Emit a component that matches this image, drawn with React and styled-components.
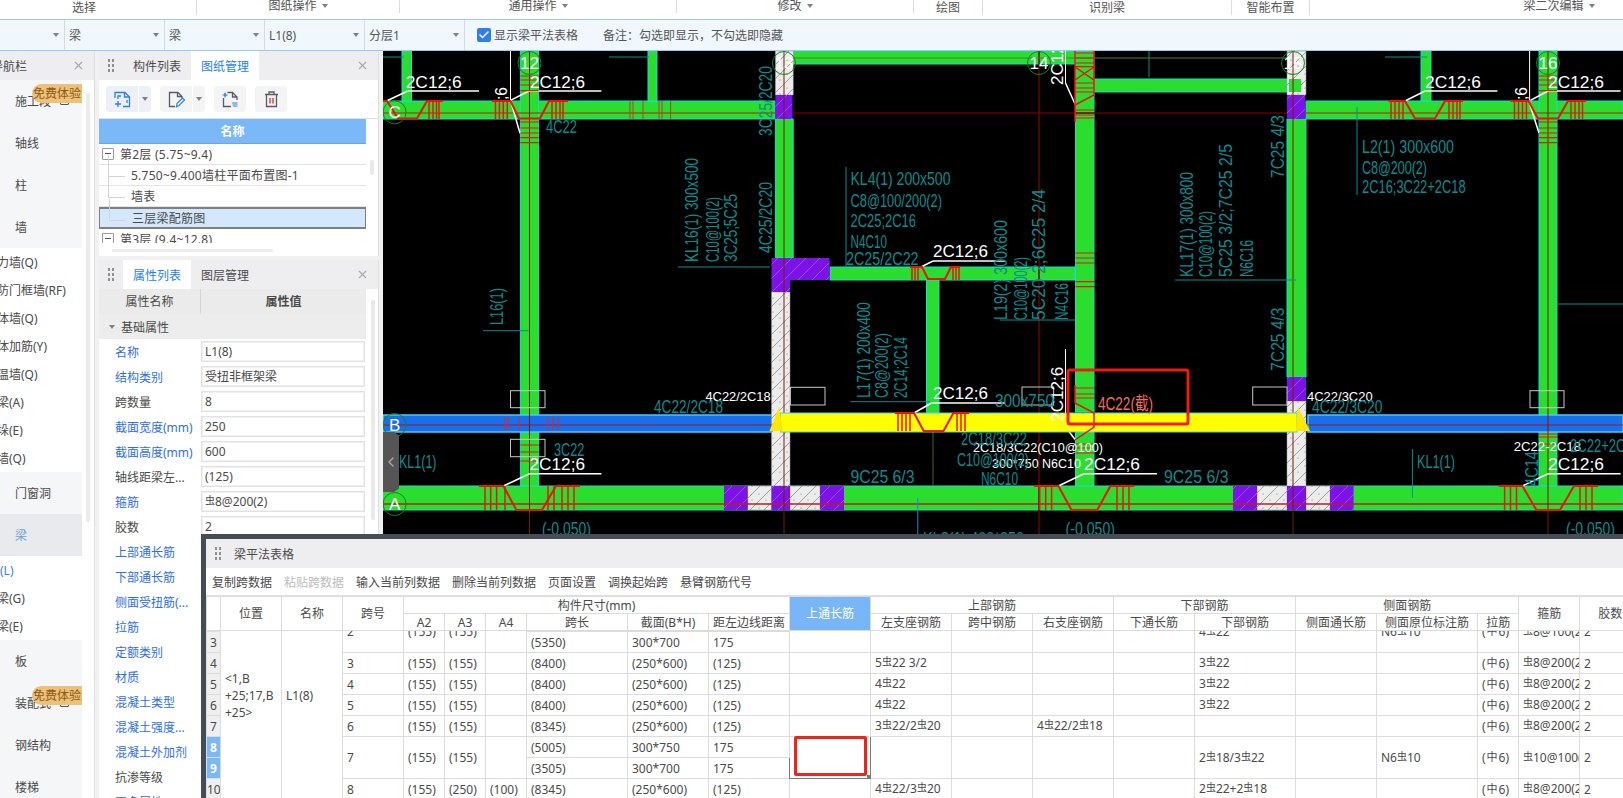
import styled, { createGlobalStyle } from "styled-components";
import { X, Check, ChevronLeft } from "lucide-react";

const Global = createGlobalStyle`
  html, body { margin: 0; padding: 0; background: #fff; overflow: hidden; }
  * { box-sizing: border-box; }
  body {
    font-family: "Noto Sans", "Noto Sans CJK SC", sans-serif;
    font-size: 12px;
    color: #4a4a4a;
  }
`;

const Page = styled.div`
  position: relative;
  width: 100vw;
  height: 100vh;
  overflow: hidden;
  display: flex;
  flex-direction: column;
`;

/* ---------- ribbon ---------- */
const Ribbon = styled.div`
  display: flex;
  height: 19px;
  background: #fff;
  overflow: hidden;
`;

const RibbonGroup = styled.div`
  width: ${(p) => p.$w}px;
  flex-shrink: 0;
  height: 15px;
  display: flex;
  justify-content: center;
  align-items: center;
  gap: 5px;
  padding: 0 ${(p) => p.$pr || 0}px 0 ${(p) => p.$pl || 0}px;
  border-right: 1px solid ${(p) => (p.$last ? "transparent" : "#dcdcdc")};
  color: #555;
  line-height: 15px;
  margin-top: ${(p) => (p.$raised ? -2 : 0)}px;
`;

const Caret = styled.i`
  display: inline-block;
  width: 0;
  height: 0;
  border-left: 3.5px solid transparent;
  border-right: 3.5px solid transparent;
  border-top: 4px solid #808080;
`;

/* ---------- beam toolbar ---------- */
const BeamBar = styled.div`
  display: flex;
  align-items: center;
  height: 32px;
  flex-shrink: 0;
  background: #f0f8fd;
  border-top: 1px solid #9cc8f4;
  border-bottom: 1px solid #9cc8f4;
`;

const SelectBox = styled.div`
  width: ${(p) => p.$w}px;
  height: 100%;
  display: flex;
  align-items: center;
  justify-content: space-between;
  padding: 0 5px 0 4px;
  border-right: 1px solid #d4dbe0;
  color: #555;
`;

const CheckBox = styled.span`
  width: 14px;
  height: 14px;
  margin-left: 12px;
  border-radius: 2px;
  background: #2f7fe8;
  color: #fff;
  display: flex;
  align-items: center;
  justify-content: center;
`;

const BarLabel = styled.span`
  margin-left: ${(p) => p.$ml}px;
  color: #555;
`;

/* ---------- main area ---------- */
const Main = styled.div`
  flex: 1;
  min-height: 0;
  display: flex;
  background: #f1f1f2;
`;

const NavPanel = styled.div`
  position: relative;
  width: 95px;
  flex-shrink: 0;
  background: #fff;
  border-right: 1px solid #dfdfdf;
  overflow: hidden;
`;

const PanelHead = styled.div`
  position: relative;
  height: ${(p) => p.$h || 29}px;
  display: flex;
  align-items: center;
  background: #eeeef0;
  flex-shrink: 0;
`;

const NavTitle = styled.span`
  margin-left: -33px;
  white-space: nowrap;
  font-size: 12px;
`;

const CloseBtn = styled.span`
  position: absolute;
  right: ${(p) => p.$r}px;
  top: 8px;
  color: #a8a8a8;
  display: flex;
`;

const NavGroup = styled.div`
  width: 82px;
  background: #f5f6f8;
`;

const NavItem = styled.div`
  position: relative;
  height: 42px;
  padding-left: 15px;
  display: flex;
  align-items: center;
  white-space: nowrap;
  background: ${(p) => (p.$active ? "#e9eaee" : "transparent")};
  color: ${(p) => (p.$active ? "#6d9fdc" : "#4a4a4a")};
`;

const NavSub = styled.div`
  height: 28px;
  margin-left: ${(p) => p.$ml || -15}px;
  display: flex;
  align-items: center;
  white-space: nowrap;
  color: ${(p) => (p.$active ? "#3b82e8" : "#4a4a4a")};
`;

const Badge = styled.span`
  position: absolute;
  left: 32px;
  top: 4px;
  width: 50px;
  height: 19px;
  border-radius: 10px 0 0 10px;
  background: #eec078;
  color: #8a5a1a;
  line-height: 19px;
  text-align: center;
  font-size: 12px;
  white-space: nowrap;
`;

const LockMark = styled.span`
  position: absolute;
  left: 60px;
  top: 15px;
  width: 9px;
  height: 10px;
  border: 1px solid #555;
  border-radius: 1px;
`;

const NavScroll = styled.span`
  position: absolute;
  left: 86px;
  top: 42px;
  bottom: 276px;
  width: 4px;
  border-radius: 2px;
  background: #ebebeb;
`;

const Sidebar = styled.div`
  width: 280px;
  margin-left: 4px;
  flex-shrink: 0;
  display: flex;
  flex-direction: column;
  gap: 4px;
`;

const Panel = styled.div`
  position: relative;
  background: #fff;
  overflow: hidden;
  height: ${(p) => (p.$h ? `${p.$h}px` : "auto")};
  flex: ${(p) => (p.$h ? "none" : 1)};
  border-right: 1px solid #dedede;
`;

const Grip = styled.span`
  width: 7px;
  height: 15px;
  margin-left: 8px;
  margin-right: ${(p) => p.$mr}px;
  flex-shrink: 0;
  background-image: radial-gradient(circle, #8f8f8f 1.2px, transparent 1.4px);
  background-size: 4px 5px;
`;

const Tab = styled.div`
  height: 100%;
  width: ${(p) => p.$w}px;
  display: flex;
  align-items: center;
  justify-content: center;
  background: ${(p) => (p.$on ? "#fff" : "transparent")};
  color: ${(p) => (p.$on ? "#1f82ee" : "#4a4a4a")};
`;

const IconBar = styled.div`
  height: 39px;
  padding: 6px 0 0 7px;
  display: flex;
  border-bottom: 1px solid #e2e2e2;
`;

const IconBtn = styled.span`
  width: 32px;
  height: 26px;
  margin-right: ${(p) => p.$mr || 0}px;
  display: flex;
  align-items: center;
  justify-content: center;
  background: ${(p) => (p.$on ? "#edf1f7" : "#f4f4f5")};
  border-radius: ${(p) => (p.$split ? "3px 0 0 3px" : "3px")};
`;

const IconDrop = styled.span`
  width: 12px;
  height: 26px;
  margin: 0 ${(p) => p.$mr}px 0 1px;
  display: flex;
  align-items: center;
  justify-content: center;
  background: ${(p) => (p.$on ? "#edf1f7" : "#f4f4f5")};
  border-radius: 0 3px 3px 0;
`;

const NameHead = styled.div`
  width: 267px;
  height: 25px;
  background: #7ab8f8;
  border-bottom: 1px solid #6aa6e6;
  color: #fff;
  font-weight: 700;
  line-height: 25px;
  text-align: center;
`;

const TreeBody = styled.div`
  width: 267px;
  height: 99px;
  overflow: hidden;
`;

const TreeRow = styled.div`
  position: relative;
  height: ${(p) => (p.$sel ? 22 : 21)}px;
  display: flex;
  align-items: center;
  white-space: nowrap;
  letter-spacing: 0.25px;
  padding-left: ${(p) => (p.$leaf ? 32 : 3)}px;
  border-bottom: 1px solid #e4e4e4;
  background: ${(p) => (p.$sel ? "#d3e8fc" : "#fff")};
  ${(p) => p.$sel && "border: 1px solid #7f7f7f; border-width: 2px 1px 2px 1px;"}

  &::before {
    content: "";
    display: ${(p) => (p.$leaf ? "block" : "none")};
    position: absolute;
    left: 9px;
    top: -10px;
    width: 16px;
    height: 21px;
    border-left: 1px solid #d4d4d4;
    border-bottom: 1px solid #d4d4d4;
  }
`;

const ExpandBox = styled.span`
  position: relative;
  width: 12px;
  height: 12px;
  margin-right: 6px;
  border: 1px solid #9a9a9a;
  border-radius: 1px;
  background: #fff;

  &::after {
    content: "";
    position: absolute;
    left: 2px;
    top: 4px;
    width: 6px;
    height: 1px;
    background: #555;
  }
`;

const HScroll = styled.div`
  width: 161px;
  height: 3px;
  margin: 6px 0 0 13px;
  border-radius: 2px;
  background: #ededed;
`;

const VScroll = styled.span`
  position: absolute;
  left: ${(p) => p.$l}px;
  top: ${(p) => p.$t}px;
  width: 4px;
  height: ${(p) => p.$h}px;
  border-radius: 2px;
  background: #e9e9e9;
`;

const PropHead = styled.div`
  width: 267px;
  height: 25px;
  display: grid;
  grid-template-columns: 101px 1fr;
  background: #ebebeb;
  line-height: 25px;
  text-align: center;
`;

const PropHeadCell = styled.div`
  font-weight: ${(p) => (p.$bold ? 700 : 400)};
  border-left: ${(p) => (p.$bold ? "1px solid #d6d6d6" : "none")};
`;

const PropSection = styled.div`
  width: 267px;
  height: 25px;
  display: flex;
  align-items: center;
  gap: 6px;
  padding-left: 10px;
  background: #ededed;
`;

const PropRow = styled.div`
  height: 25px;
  display: grid;
  grid-template-columns: 102px 164px;
  align-items: center;
  white-space: nowrap;
`;

const PropLabel = styled.span`
  padding-left: 16px;
  color: ${(p) => (p.$blue ? "#2f6fe6" : "#4a4a4a")};
`;

const PropValue = styled.span`
  height: 21px;
  padding-left: 3px;
  border: 1px solid #e2e2e2;
  box-shadow: inset 0 0 0 1px #f0f0f0;
  line-height: 19px;
`;

/* ---------- drawing ---------- */
const Canvas = styled.div`
  position: relative;
  flex: 1;
  min-width: 0;
  margin-left: 4px;
  background: #000;
  overflow: hidden;

  svg {
    display: block;
    width: 100%;
    height: 100%;
  }
  text {
    font-family: "Liberation Sans", "Noto Sans CJK SC", sans-serif;
  }
`;

const CollapseTab = styled.div`
  position: absolute;
  left: 0;
  top: 381px;
  width: 16px;
  height: 60px;
  background: #555;
  color: #aaa;
  display: flex;
  align-items: center;
  clip-path: polygon(0 0, 70% 0, 100% 6%, 100% 94%, 70% 100%, 0 100%);
`;

/* ---------- floating table window ---------- */
const FloatWindow = styled.div`
  position: absolute;
  left: 201px;
  top: 534px;
  width: 1500px;
  height: 300px;
  border: 5px solid #444c55;
  background: #fff;
  overflow: hidden;
`;

const WindowTitle = styled.div`
  height: 29px;
  display: flex;
  align-items: center;
  background: #eeeef0;
`;

const WindowTools = styled.div`
  height: 28px;
  display: flex;
  align-items: center;
  gap: 12px;
  padding-left: 6px;
  border-bottom: 1px solid #e0e0e0;
`;

const ToolLink = styled.span`
  color: ${(p) => (p.$off ? "#bdbdbd" : "#4a4a4a")};
  white-space: nowrap;
`;

const Table = styled.table`
  table-layout: fixed;
  border-collapse: collapse;
  width: 1434px;
  margin-top: ${(p) => p.$mt || 0}px;
`;

const BodyClip = styled.div`
  height: 170px;
  overflow: hidden;
`;

const Th = styled.td`
  height: 17px;
  padding: 0;
  border: 1px solid #dcdcdc;
  text-align: center;
  white-space: nowrap;
  overflow: hidden;
  line-height: 15px;
  background: ${(p) => (p.$pick ? "#78b6f7" : "#fff")};
  color: ${(p) => (p.$pick ? "#fff" : "#4a4a4a")};
`;

const Td = styled.td`
  height: 21px;
  padding: ${(p) => p.$pt || 0}px 0 0 4px;
  border: 1px solid #dcdcdc;
  white-space: nowrap;
  overflow: hidden;
  line-height: 17px;
  ${(p) => p.$pt && "vertical-align: top;"}
`;

const RowNo = styled.td`
  height: 21px;
  padding: 0;
  border: 1px solid #dcdcdc;
  text-align: center;
  overflow: hidden;
  background: ${(p) => (p.$on ? "#7ab8f8" : "#efefef")};
  color: ${(p) => (p.$on ? "#fff" : "#4a4a4a")};
  font-weight: ${(p) => (p.$on ? 700 : 400)};
`;

const PickedCell = styled.td`
  position: relative;
  padding: 0;
  border: 1px solid #7a7a7a;
`;

const RedBox = styled.span`
  position: absolute;
  left: 4px;
  top: -1px;
  width: 73px;
  height: 40px;
  border: 3px solid #f0241a;
  border-radius: 2px;
`;

const PickHandle = styled.span`
  position: absolute;
  right: -1px;
  bottom: -1px;
  width: 4px;
  height: 4px;
  background: #7a7a7a;
`;

const BarMark = styled.span`
  font-size: 10px;
  position: relative;
  top: -2px;
`;

const RoundMark = styled.span`
  font-size: 11px;
  position: relative;
  top: -1px;
  margin: 0 1px;
`;

/* ---------- data ---------- */
const ribbon = [
  { t: "选择", w: 197, pr: 28 },
  { t: "图纸操作", w: 203, caret: true },
  { t: "通用操作", w: 277, caret: true },
  { t: "修改", w: 237, caret: true },
  { t: "绘图", w: 69 },
  { t: "识别梁", w: 249 },
  { t: "智能布置", w: 78 },
  { t: "梁二次编辑", w: 313, caret: true, pl: 186, last: true },
];

const navA = ["施工段", "轴线", "柱", "墙"];
const navB = ["剪力墙(Q)", "人防门框墙(RF)", "砌体墙(Q)", "砌体加筋(Y)", "保温墙(Q)", "暗梁(A)", "墙垛(E)", "幕墙(Q)"];
const navC = ["板", "装配式", "钢结构", "楼梯"];

const props = [
  ["名称", "L1(8)", 1],
  ["结构类别", "受扭非框架梁", 1],
  ["跨数量", "8", 0],
  ["截面宽度(mm)", "250", 1],
  ["截面高度(mm)", "600", 1],
  ["轴线距梁左...", "(125)", 0],
  ["箍筋", "#8@200(2)", 1],
  ["胶数", "2", 0],
  ["上部通长筋", "", 1],
  ["下部通长筋", "", 1],
  ["侧面受扭筋(...", "", 1],
  ["拉筋", "", 1],
  ["定额类别", "", 1],
  ["材质", "", 1],
  ["混凝土类型", "", 1],
  ["混凝土强度...", "", 1],
  ["混凝土外加剂", "", 1],
  ["抗渗等级", "", 0],
  ["更多属性", "", 1],
];

const colWidths = [14, 61, 61, 61, 41, 41, 41, 101, 81, 81, 81, 81, 81, 81, 81, 101, 81, 101, 41, 61, 61];

const tools = [
  ["复制跨数据"],
  ["粘贴跨数据", true],
  ["输入当前列数据"],
  ["删除当前列数据"],
  ["页面设置"],
  ["调换起始跨"],
  ["悬臂钢筋代号"],
];

const S = (t) => [t, 2];
const rows = [
  { no: 2, c: [S("2"), S("(155)"), S("(155)"), S(""), "(3000)", "300*750", "175", S(""), S(""), S(""), S(""), S(""), S("4#22"), S(""), S("N6#10"), S("($6)"), S("#8@100(2)"), S("2")] },
  { no: 3, c: [null, null, null, null, "(5350)", "300*700", "175"] },
  { no: 4, c: ["3", "(155)", "(155)", "", "(8400)", "(250*600)", "(125)", "", "5#22 3/2", "", "", "", "3#22", "", "", "($6)", "#8@200(2)", "2"] },
  { no: 5, c: ["4", "(155)", "(155)", "", "(8400)", "(250*600)", "(125)", "", "4#22", "", "", "", "3#22", "", "", "($6)", "#8@200(2)", "2"] },
  { no: 6, c: ["5", "(155)", "(155)", "", "(8400)", "(250*600)", "(125)", "", "4#22", "", "", "", "3#22", "", "", "($6)", "#8@200(2)", "2"] },
  { no: 7, c: ["6", "(155)", "(155)", "", "(8345)", "(250*600)", "(125)", "", "3#22/2#20", "", "4#22/2#18", "", "", "", "", "($6)", "#8@200(2)", "2"] },
  { no: 8, on: true, c: [S("7"), S("(155)"), S("(155)"), S(""), "(5005)", "300*750", "175", "PICK", S(""), S(""), S(""), S(""), S("2#18/3#22"), S(""), S("N6#10"), S("($6)"), S("#10@100(2)"), S("2")] },
  { no: 9, on: true, c: [null, null, null, null, "(3505)", "300*700", "175"] },
  { no: 10, c: ["8", "(155)", "(250)", "(100)", "(8345)", "(250*600)", "(125)", "", "4#22/3#20", "", "", "", "2#22+2#18", "", "", "($6)", "#8@200(2)", "2"] },
];

// 虫 / 中 stand in for the rebar grade symbols of the cad font
const rich = (t) =>
  t.split(/([#$])/).map((part, i) =>
    part === "#" ? <BarMark key={i}>虫</BarMark> : part === "$" ? <RoundMark key={i}>中</RoundMark> : part
  );

const CYAN = "#0a8c90";
const green = [
  [383, 101, 392, 18], [793, 51, 282, 13], [1094, 79, 193, 13], [1306, 101, 317, 18],
  [830, 267, 245, 13], [926.5, 280, 12.5, 133], [402, 51, 9.5, 50], [648, 51, 9, 50],
  [1421, 51, 10, 50], [520.4, 51, 18.2, 364], [520.4, 432, 18.2, 54], [775.4, 119, 17.8, 139],
  [1075.5, 51, 18.5, 361], [1075.5, 432, 18.5, 54], [1287, 119, 19, 258], [1539, 51, 18, 364],
  [1539, 432, 18, 54], [383, 486, 1240, 24],
];
const walls = [
  [775.4, 51, 17.8, 44], [771.5, 292, 18.5, 194], [1287, 51, 19, 44], [1287, 401, 19, 85],
  [747.7, 486, 23.8, 24], [790, 486, 30, 24], [1257, 486, 30, 24], [1306, 486, 24, 24],
];
const purple = [
  [775.4, 95, 17, 24], [771.5, 258, 58, 22], [771.5, 280, 18.5, 12], [1287, 95, 18, 24],
  [1287, 377, 19, 24], [724, 486, 23.7, 24], [771.5, 486, 18.5, 24], [820, 486, 24, 24],
  [1233, 486, 24, 24], [1287, 486, 19, 24], [1330, 486, 23.6, 24],
];

const redShapes = [
  { pts: "383,101 387,101 398,118.5 417,118.5 427,101 443,101", bars: [429, 433, 436.5, 439], y: [101, 119] },
  { pts: "492,101 510.5,101 519,118.5 540,118.5 549,101 568,101", bars: [495.5, 499.4, 503.3, 507.3, 552, 556, 560, 563], y: [101, 119] },
  { pts: "1388.5,101 1405,101 1415,118.5 1435,118.5 1445,101 1463,101", bars: [1391, 1395, 1399, 1403, 1449, 1453, 1457, 1460], y: [101, 119] },
  { pts: "1510.5,101 1528.4,101 1538,118.5 1558,118.5 1568,101 1586,101", bars: [1514.5, 1518.5, 1522.5, 1526.4, 1571, 1575, 1579, 1582.5], y: [101, 119] },
  { pts: "895,413 914,413 923.7,431 943.5,431 953.4,413 969,413", bars: [898, 902, 906, 910, 957, 961, 965], y: [413, 431] },
  { pts: "910,267 922,267 928,279 945,279 951,267 960,267", bars: [912, 915, 918, 953, 956, 959], y: [267, 280] },
  { pts: "479,486 503.4,486 516.4,510 542,510 556,486 580,486", bars: [485, 490.7, 496.6, 505, 548, 554, 562, 568, 574], y: [486, 510] },
  { pts: "1033.8,486 1058.4,486 1071.5,510 1097.3,510 1110.4,486 1134.3,486", bars: [1039.7, 1045.7, 1051.6, 1117, 1123, 1129], y: [486, 510] },
  { pts: "1498.6,486 1522.4,486 1536.4,510 1560,510 1574,486 1598,486", bars: [1504.6, 1510.5, 1516.5, 1580, 1586, 1592], y: [486, 510] },
];

// [x, baseline, width, size, text, fill, rotated]
const W = "#fff";
const labels = [
  [405.7, 87.5, 56, 17, "2C12;6", W], [530, 87.5, 55, 17, "2C12;6", W], [1425, 87.5, 56, 17, "2C12;6", W],
  [1548, 87.5, 56, 17, "2C12;6", W], [933, 257, 55, 17, "2C12;6", W], [933, 399, 55, 17, "2C12;6", W],
  [529.5, 470, 55.5, 17, "2C12;6", W], [1084, 470, 56, 17, "2C12;6", W], [1548, 470, 56, 17, "2C12;6", W],
  [1063, 85, 55, 17, "2C12;6", W, 1], [1063, 421.7, 55, 17, "2C12;6", W, 1], [507, 100, 13, 17, ";6", W, 1], [1527, 100, 13, 17, ";6", W, 1],
  [705.4, 401, 65.3, 13, "4C22/2C18", W], [1307, 400.7, 65.7, 13, "4C22/3C20", W], [973, 451.7, 130, 13, "2C18/3C22(C10@100)", W],
  [992, 468, 89, 13, "300*750 N6C10", W], [1513.7, 450.7, 67.3, 13, "2C22-2C18", W],
  [546, 133, 31, 18, "4C22", CYAN], [772, 136, 70, 18, "3C25/2C20", CYAN, 1], [772, 253, 71, 18, "4C25/2C20", CYAN, 1],
  [698, 262, 104, 18, "KL16(1) 300x500", CYAN, 1], [719, 262, 65, 18, "C10@100(2)", CYAN, 1], [737, 262, 68, 18, "3C25;5C25", CYAN, 1],
  [850.5, 185, 100, 18, "KL4(1) 200x500", CYAN], [850.5, 206.7, 91.5, 18, "C8@100/200(2)", CYAN], [850.5, 226.7, 65.5, 18, "2C25;2C16", CYAN],
  [850.5, 248, 36.5, 18, "N4C10", CYAN], [846, 265, 72.6, 18, "2C25/2C22", CYAN],
  [1362, 152.7, 92, 18, "L2(1) 300x600", CYAN], [1362, 174, 65, 18, "C8@200(2)", CYAN], [1362, 192.7, 103.6, 18, "2C16;3C22+2C18", CYAN],
  [1284, 178, 63, 18, "7C25 4/3", CYAN, 1], [1284, 370.7, 63, 18, "7C25 4/3", CYAN, 1],
  [1193, 277, 105, 18, "KL17(1) 300x800", CYAN, 1], [1212, 277, 66, 18, "C10@100(2)", CYAN, 1], [1232, 277, 133, 18, "5C25 3/2;7C25 2/5", CYAN, 1],
  [1253, 277, 37, 18, "N6C16", CYAN, 1],
  [1007, 320, 100, 18, "L19(2) 300x600", CYAN, 1], [1027, 320, 63, 18, "C10@100(2)", CYAN, 1], [1045, 320, 131, 18, "5C20 2;6C25 2/4", CYAN, 1], [1068, 320, 37, 18, "N4C16", CYAN, 1],
  [503, 325, 37, 18, "L16(1)", CYAN, 1], [654, 413, 69, 18, "4C22/2C18", CYAN], [1312, 413, 70.6, 18, "4C22/3C20", CYAN],
  [399, 467.7, 37.5, 18, "KL1(1)", CYAN], [1417, 467.7, 38, 18, "KL1(1)", CYAN], [554, 456, 30.4, 18, "3C22", CYAN],
  [870, 398, 96, 18, "L17(1) 200x400", CYAN, 1], [888, 398, 65, 18, "C8@200(2)", CYAN, 1], [907, 398, 61, 18, "2C14;2C14", CYAN, 1],
  [961, 445, 66, 18, "2C18/3C22", CYAN], [957, 466, 72, 18, "C10@100(2)", CYAN], [981, 485, 37, 18, "N6C10", CYAN], [995, 407, 59, 18, "300x750", CYAN],
  [850.5, 483, 64, 18, "9C25 6/3", CYAN], [1164, 483, 64.5, 18, "9C25 6/3", CYAN],
  [542, 534.7, 49, 18, "(-0.050)", CYAN], [1065.5, 534.7, 49.5, 18, "(-0.050)", CYAN], [1566, 534.7, 49, 18, "(-0.050)", CYAN],
  [1570, 451.7, 70, 18, "2C22+2C18", CYAN], [1538, 486, 35, 18, "4C14", CYAN, 1], [923, 545, 101, 18, "KL8(1) 400*850", CYAN],
  [1098, 410, 55, 18, "4C22(截)", "#f56a58"],
];

const axes = [
  [394.6, 112.3, "C"], [529.5, 63, "12"], [784, 63, "13"], [1039, 63, "14"],
  [1293, 63, "15"], [1548, 63, "16"], [394.6, 425, "B"], [394.6, 504, "A"],
];

// [x1, y1, x2, y2, colour, width]
const lines = [
  [383, 113, 775, 113, "#8a5c1c", 1.5], [793, 113, 1287, 113, "#5c0000", 1.5], [1306, 113, 1623, 113, "#8a5c1c", 1.5],
  [383, 425, 780, 425, "#a01818", 1], [1308, 425, 1623, 425, "#a01818", 1], [383, 504, 1623, 504, "#c01c1c", 1.5],
  [529.5, 51, 529.5, 534, "#7a1a00", 1], [784, 51, 784, 534, "#7a1a00", 1], [1039, 51, 1039, 534, "#6a0606", 1.5],
  [1293, 51, 1293, 534, "#7a1a00", 1], [1548, 51, 1548, 534, "#7a1a00", 1], [933, 432, 933, 486, "#3a6a28", 1],
  [793, 58, 1287, 58, "#4a7a38", 1],
  [407.7, 91, 479, 91, W, 1.5], [407.7, 91, 387, 100.7, W, 1.5], [529, 91, 601.4, 91, W, 1.5], [529, 91, 510.5, 100.4, W, 1.5],
  [510.5, 51, 510.5, 100, W, 1], [510.5, 100.4, 520, 133.3, W, 1.5], [1425, 91, 1497.4, 91, W, 1.5], [1425, 91, 1405, 101, W, 1.5],
  [1548, 91, 1620.6, 91, W, 1.5], [1548, 91, 1530.4, 100.4, W, 1.5], [1529.6, 51, 1529.6, 100, W, 1], [1528.4, 100, 1539, 133, W, 1.5],
  [931.6, 403, 1005, 403, W, 1.5], [931.6, 403, 914, 413, W, 1.5], [933, 261, 1005, 261, W, 1.5], [933, 261, 921, 267, W, 1.5],
  [529.5, 473.7, 601.4, 473.7, W, 1.5], [529.5, 473.7, 503.4, 486, W, 1.5], [1084, 473.7, 1157, 473.7, W, 1.5], [1084, 473.7, 1058.4, 486, W, 1.5],
  [1548, 473.7, 1620.6, 473.7, W, 1.5], [1548, 473.7, 1522.4, 486, W, 1.5],
  [1065.5, 51, 1065.5, 83, W, 1], [1065.5, 83, 1075.5, 105, W, 1.5], [1065.5, 349, 1065.5, 427, W, 1], [1065.5, 427, 1075.5, 440, W, 1.5],
  [846, 167, 846, 267, CYAN, 1], [678, 267, 770, 267, CYAN, 1], [1357, 107, 1357, 195, CYAN, 1], [483, 330.7, 528.7, 330.7, CYAN, 1],
  [850.5, 401.7, 930, 401.7, CYAN, 1], [1175, 280, 1296, 280, CYAN, 1], [1000, 320, 1075, 320, CYAN, 1], [917.8, 498, 917.8, 534, "#1a8ad0", 1],
  [1412.4, 449, 1412.4, 498, CYAN, 1], [383, 57, 404, 57, CYAN, 1], [609, 57, 649, 57, CYAN, 1], [1385, 57, 1427, 57, CYAN, 1], [1149, 51, 1149, 77, CYAN, 1],
  [1557, 304, 1623, 304, CYAN, 1],
];

// red stirrups across a column: left edge, width, heights
const stirrups = [
  [520.4, 18.2, [76, 80, 85, 90.7, 122, 128, 133, 137.7, 142.7, 445, 452, 461]],
  [1539, 18, [76, 80, 85, 90.7, 122, 128, 133, 137.7, 142.7, 434, 437, 444]],
  [1075.5, 18.5, [53, 58, 63, 66.7, 83, 88, 92, 110, 115, 118, 253, 258, 263, 281.6, 286.7, 388, 394, 398, 444, 448, 453]],
];
const redZig = "M1075,51 V122 M1094,51 V80 L1075,67 M1075,80 L1094,67 M1094,80 V95 L1075,105 M1075,385 V403 L1094,413 V427 L1075,440";

const dims = [[630, 633, 643, 659, 662, 670.6], [505, 508, 519, 548, 553, 558]];

const whiteBoxes = [
  [790.4, 387.3, 34.6, 17.7], [510.5, 390.7, 34.5, 17], [510.5, 439.3, 34.5, 17.4],
  [1252.7, 387, 34.3, 18], [1022, 387, 31.6, 18], [1530, 390.7, 34, 17],
];

function CadDrawing() {
  return (
    <svg viewBox="383 51 1240 747" preserveAspectRatio="none">
      <defs>
        <pattern id="wallHatch" width="14" height="14" patternUnits="userSpaceOnUse">
          <rect width="14" height="14" fill="#ececec" />
          <path d="M0 14 L14 0" stroke="#8a8a8a" strokeWidth="0.8" />
          <circle cx="3" cy="4" r="0.6" fill="#777" />
          <circle cx="10" cy="10" r="0.6" fill="#777" />
        </pattern>
        <pattern id="purpleHatch" width="14" height="14" patternUnits="userSpaceOnUse">
          <rect width="14" height="14" fill="#7d12e8" />
          <path d="M0 14 L14 0" stroke="#a880d8" strokeWidth="0.6" />
        </pattern>
      </defs>

      {green.map(([x, y, w, h], i) => (
        <rect key={i} x={x} y={y} width={w} height={h} fill="#2bdd2f" stroke="#16dcdc" strokeWidth="1" />
      ))}
      <rect x="383" y="415" width="397" height="17" fill="#176ff0" stroke="#4fc6f0" strokeWidth="1.5" />
      <rect x="1308" y="415" width="315" height="17" fill="#176ff0" stroke="#4fc6f0" strokeWidth="1.5" />
      {walls.map(([x, y, w, h], i) => (
        <rect key={i} x={x} y={y} width={w} height={h} fill="url(#wallHatch)" stroke="#9a9a9a" strokeWidth="0.5" />
      ))}
      <rect x="1289" y="79" width="12" height="13" fill="#2bdd2f" />
      {purple.map(([x, y, w, h], i) => (
        <rect key={i} x={x} y={y} width={w} height={h} fill="url(#purpleHatch)" />
      ))}

      {lines.map(([x1, y1, x2, y2, c, w], i) => (
        <line key={i} x1={x1} y1={y1} x2={x2} y2={y2} stroke={c} strokeWidth={w} />
      ))}

      <rect x="780.5" y="413" width="516.5" height="19" fill="#ffff00" stroke="#4fd0e0" strokeWidth="1" />
      <polygon points="779,407 769.5,431 783,431" fill="#ffe800" />
      <polygon points="1298,407 1296,431 1310,431" fill="#ffe800" />

      {redShapes.map((s, i) => (
        <g key={i} stroke="#f01010" fill="none" strokeWidth="1.5">
          <polyline points={s.pts} strokeWidth="2" />
          {s.bars.map((x) => (
            <line key={x} x1={x} y1={s.y[0]} x2={x} y2={s.y[1]} />
          ))}
        </g>
      ))}
      {stirrups.map(([left, w, ys], i) => (
        <path
          key={i}
          d={ys.map((y) => `M${left} ${y}h${w}`).join(" ")}
          stroke="#f01010"
          strokeWidth="1.2"
          fill="none"
        />
      ))}
      <path d={redZig} stroke="#f01010" strokeWidth="1.5" fill="none" />
      {dims.map((xs, i) =>
        xs.map((x) =>
          i === 0 ? (
            <line key={x} x1={x} y1="101" x2={x} y2="119" stroke="#c03a2a" strokeWidth="1" />
          ) : (
            <line key={x} x1={x} y1="417" x2={x} y2="430" stroke="#e0202a" strokeWidth="1" />
          )
        )
      )}

      {whiteBoxes.map(([x, y, w, h], i) => (
        <rect key={i} x={x} y={y} width={w} height={h} fill="none" stroke="#c8c8c8" strokeWidth="1" />
      ))}

      {axes.map(([x, y, t]) => (
        <g key={t}>
          <circle cx={x} cy={y} r="11.5" fill="none" stroke="#0c8a14" strokeWidth="1" />
          <text x={x} y={y + 6} textAnchor="middle" fontSize="17" fill="#fff">{t}</text>
        </g>
      ))}

      {labels.map(([x, y, len, size, t, fill, rot], i) => (
        <text
          key={i}
          x={x}
          y={y}
          fontSize={size}
          fill={fill}
          textLength={len}
          lengthAdjust="spacingAndGlyphs"
          transform={rot ? `rotate(-90 ${x} ${y})` : undefined}
        >
          {t}
        </text>
      ))}

      <rect x="1068" y="370" width="120" height="54" rx="2" fill="none" stroke="#f01a10" strokeWidth="3" />
    </svg>
  );
}

function AddPlanIcon() {
  return (
    <svg width="17" height="17" viewBox="0 0 17 17" fill="none" stroke="#2d7fe6" strokeWidth="1.3">
      <path d="M1 7V1.5H11L15.5 6V15.5H9" />
      <path d="M10.5 1.5V6H15.5" />
      <path d="M4 8V5H7" />
      <path d="M13 9V12" />
      <path d="M1 13H7M4 10V16" />
    </svg>
  );
}

function EditPlanIcon() {
  return (
    <svg width="17" height="17" viewBox="0 0 17 17" fill="none" strokeWidth="1.3">
      <path d="M7 15.5H1.5V1.5H10L14 5.5V7" stroke="#555b6a" />
      <path d="M9.5 1.5V5.5H14" stroke="#555b6a" />
      <path d="M8.5 15.8L9 12.5L14.5 7L16.5 9L11 14.5Z" stroke="#3f86e6" />
    </svg>
  );
}

function ExportPlanIcon() {
  return (
    <svg width="17" height="17" viewBox="0 0 17 17" fill="none" strokeWidth="1.3">
      <path d="M1.5 7V15.5H9M5.5 1.5H10.5L15 6V9" stroke="#555b6a" />
      <path d="M10.5 1.5V6H15" stroke="#555b6a" />
      <path d="M3 1L4.2 3.2L6.3 4L4.2 4.8L3 7L2 4.8L0 4L2 3.2Z" fill="#3f86e6" stroke="none" />
      <path d="M10 11H15.5V16H11Z" fill="#8db8ee" stroke="none" />
    </svg>
  );
}

function BinIcon() {
  return (
    <svg width="15" height="17" viewBox="0 0 15 17" fill="none" strokeWidth="1.3">
      <path d="M1 3.5H14M5 3.5V1H10V3.5" stroke="#555b6a" />
      <path d="M2.5 3.5V15.5H12.5V3.5" stroke="#555b6a" />
      <path d="M6 7V12.5M9 7V12.5" stroke="#e02a22" />
    </svg>
  );
}

export default function App() {
  return (
    <Page>
      <Global />
      <Ribbon>
        {ribbon.map((g) => (
          <RibbonGroup key={g.t} $w={g.w} $pr={g.pr} $pl={g.pl} $last={g.last} $raised={g.caret}>
            {g.t}
            {g.caret && <Caret />}
          </RibbonGroup>
        ))}
      </Ribbon>

      <BeamBar>
        <SelectBox $w={65}>
          <span />
          <Caret />
        </SelectBox>
        {["梁", "梁", "L1(8)", "分层1"].map((t, i) => (
          <SelectBox key={i} $w={100}>
            {t}
            <Caret />
          </SelectBox>
        ))}
        <CheckBox>
          <Check size={12} strokeWidth={3} />
        </CheckBox>
        <BarLabel $ml={3}>显示梁平法表格</BarLabel>
        <BarLabel $ml={25}>备注：勾选即显示，不勾选即隐藏</BarLabel>
      </BeamBar>

      <Main>
        <NavPanel>
          <PanelHead>
            <NavTitle>模块导航栏</NavTitle>
            <CloseBtn $r={9}>
              <X size={13} />
            </CloseBtn>
          </PanelHead>
          <NavGroup>
            {navA.map((t, i) => (
              <NavItem key={t}>
                {t}
                {i === 0 && (
                  <>
                    <LockMark />
                    <Badge>免费体验</Badge>
                  </>
                )}
              </NavItem>
            ))}
          </NavGroup>
          {navB.map((t) => (
            <NavSub key={t}>{t}</NavSub>
          ))}
          <NavGroup>
            <NavItem>门窗洞</NavItem>
            <NavItem $active>梁</NavItem>
          </NavGroup>
          <NavSub $active $ml={-12}>梁(L)</NavSub>
          <NavSub>连梁(G)</NavSub>
          <NavSub>圈梁(E)</NavSub>
          <NavGroup>
            {navC.map((t, i) => (
              <NavItem key={t}>
                {t}
                {i === 1 && (
                  <>
                    <LockMark />
                    <Badge>免费体验</Badge>
                  </>
                )}
              </NavItem>
            ))}
          </NavGroup>
          <NavScroll />
        </NavPanel>

        <Sidebar>
          <Panel $h={205}>
            <PanelHead>
              <Grip $mr={9} />
              <Tab $w={68}>构件列表</Tab>
              <Tab $w={68} $on>图纸管理</Tab>
              <CloseBtn $r={9}>
                <X size={13} />
              </CloseBtn>
            </PanelHead>
            <IconBar>
              <IconBtn $on $split><AddPlanIcon /></IconBtn>
              <IconDrop $on $mr={9}><Caret /></IconDrop>
              <IconBtn $split><EditPlanIcon /></IconBtn>
              <IconDrop $mr={9}><Caret /></IconDrop>
              <IconBtn $mr={9}><ExportPlanIcon /></IconBtn>
              <IconBtn><BinIcon /></IconBtn>
            </IconBar>
            <NameHead>名称</NameHead>
            <TreeBody>
              <TreeRow><ExpandBox />第2层 (5.75~9.4)</TreeRow>
              <TreeRow $leaf>5.750~9.400墙柱平面布置图-1</TreeRow>
              <TreeRow $leaf>墙表</TreeRow>
              <TreeRow $leaf $sel>三层梁配筋图</TreeRow>
              <TreeRow><ExpandBox />第3层 (9.4~12.8)</TreeRow>
            </TreeBody>
            <HScroll />
            <VScroll $l={271} $t={109} $h={15} />
          </Panel>

          <Panel>
            <PanelHead>
              <Grip $mr={9} />
              <Tab $w={68} $on>属性列表</Tab>
              <Tab $w={68}>图层管理</Tab>
              <CloseBtn $r={9}>
                <X size={13} />
              </CloseBtn>
            </PanelHead>
            <PropHead>
              <PropHeadCell>属性名称</PropHeadCell>
              <PropHeadCell $bold>属性值</PropHeadCell>
            </PropHead>
            <PropSection>
              <Caret />
              基础属性
            </PropSection>
            {props.map(([label, value, blue]) => (
              <PropRow key={label}>
                <PropLabel $blue={blue}>{label}</PropLabel>
                <PropValue>{rich(value)}</PropValue>
              </PropRow>
            ))}
            <VScroll $l={272} $t={40} $h={220} />
          </Panel>
        </Sidebar>

        <Canvas>
          <CadDrawing />
          <CollapseTab>
            <ChevronLeft size={13} />
          </CollapseTab>
        </Canvas>
      </Main>

      <FloatWindow>
        <WindowTitle>
          <Grip $mr={13} />
          梁平法表格
        </WindowTitle>
        <WindowTools>
          {tools.map(([t, off]) => (
            <ToolLink key={t} $off={off}>{t}</ToolLink>
          ))}
        </WindowTools>
        <Table>
          <colgroup>
            {colWidths.map((w, i) => (
              <col key={i} style={{ width: w }} />
            ))}
          </colgroup>
          <tbody>
            <tr>
              <Th rowSpan={2} />
              <Th rowSpan={2}>位置</Th>
              <Th rowSpan={2}>名称</Th>
              <Th rowSpan={2}>跨号</Th>
              <Th colSpan={6}>构件尺寸(mm)</Th>
              <Th rowSpan={2} $pick>上通长筋</Th>
              <Th colSpan={3}>上部钢筋</Th>
              <Th colSpan={2}>下部钢筋</Th>
              <Th colSpan={3}>侧面钢筋</Th>
              <Th rowSpan={2}>箍筋</Th>
              <Th rowSpan={2}>胶数</Th>
            </tr>
            <tr>
              {["A2", "A3", "A4", "跨长", "截面(B*H)", "距左边线距离"].map((t) => (
                <Th key={t}>{t}</Th>
              ))}
              {["左支座钢筋", "跨中钢筋", "右支座钢筋", "下通长筋", "下部钢筋", "侧面通长筋", "侧面原位标注筋", "拉筋"].map((t) => (
                <Th key={t}>{t}</Th>
              ))}
            </tr>
          </tbody>
        </Table>
        <BodyClip>
          <Table $mt={-21}>
            <colgroup>
              {colWidths.map((w, i) => (
                <col key={i} style={{ width: w }} />
              ))}
            </colgroup>
            <tbody>
              {rows.map((row, r) => (
                <tr key={row.no}>
                  <RowNo $on={row.on}>{row.no}</RowNo>
                  {r === 0 && (
                    <>
                      <Td rowSpan={rows.length} $pt={59}>
                        {"<1,B"}
                        <br />
                        {"+25;17,B"}
                        <br />
                        {"+25>"}
                      </Td>
                      <Td rowSpan={rows.length} $pt={76}>L1(8)</Td>
                    </>
                  )}
                  {row.c.map((cell, i) => {
                    if (cell === null) return null;
                    if (cell === "PICK") {
                      return (
                        <PickedCell key={i} rowSpan={2}>
                          <RedBox />
                          <PickHandle />
                        </PickedCell>
                      );
                    }
                    const [t, span] = Array.isArray(cell) ? cell : [cell, 1];
                    return (
                      <Td key={i} rowSpan={span}>
                        {rich(t)}
                      </Td>
                    );
                  })}
                </tr>
              ))}
            </tbody>
          </Table>
        </BodyClip>
      </FloatWindow>
    </Page>
  );
}
